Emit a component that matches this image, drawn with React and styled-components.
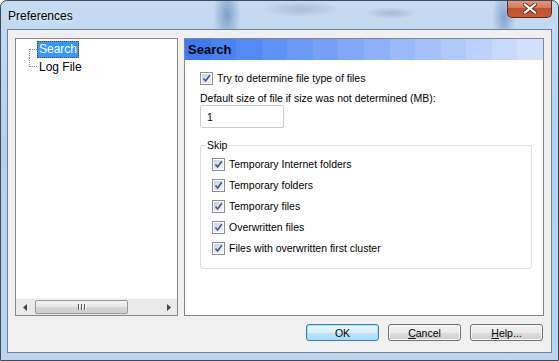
import React from 'react';
import styled, { createGlobalStyle } from 'styled-components';

const GlobalStyle = createGlobalStyle`
  html, body { margin: 0; padding: 0; background: #ffffff; }
  body { font-family: "Liberation Sans", Arial, sans-serif; }
`;

const headerSteps = (from, to, n) => {
  const stops = [];
  for (let i = 0; i < n; i++) {
    const t = i / (n - 1);
    const c = from.map((v, k) => Math.round(v + (to[k] - v) * t));
    const col = `rgb(${c.join(',')})`;
    stops.push(`${col} ${(i * 100) / n}%`, `${col} ${((i + 1) * 100) / n}%`);
  }
  return `linear-gradient(to right, ${stops.join(', ')})`;
};

const Window = styled.div`
  width: 559px;
  height: 361px;
  box-sizing: border-box;
  display: flex;
  flex-direction: column;
  border: 1px solid #3b4a5c;
  border-radius: 7px 7px 0 0;
  background:
    radial-gradient(ellipse 14px 30px at 226px 14px, rgba(70,110,170,0.55), transparent),
    radial-gradient(ellipse 12px 26px at 503px 16px, rgba(70,110,170,0.5), transparent),
    radial-gradient(ellipse 40px 8px at 300px 8px, rgba(90,110,140,0.25), transparent),
    radial-gradient(ellipse 26px 6px at 390px 12px, rgba(90,110,140,0.3), transparent),
    linear-gradient(180deg, #c4dbf1 0%, #b7d1ec 40%, #bcd5ee 100%);
  overflow: hidden;
`;

const TitleBar = styled.div`
  height: 28px;
  flex: none;
  display: flex;
  align-items: flex-start;
  justify-content: space-between;
`;

const Title = styled.div`
  font-size: 12px;
  color: #000;
  padding: 8px 0 0 7px;
  text-shadow: 0 0 6px rgba(255,255,255,0.9);
`;

const CloseButton = styled.div`
  width: 45px;
  height: 18px;
  margin-right: 6px;
  margin-top: -1px;
  box-sizing: border-box;
  border: 1px solid #5e2b1e;
  border-top: none;
  border-radius: 0 0 5px 5px;
  background: linear-gradient(180deg, #e29c86 0%, #d47a5e 45%, #c0502f 50%, #c95b36 100%);
  display: flex;
  align-items: center;
  justify-content: center;
`;

const Client = styled.div`
  flex: 1;
  margin: 0 6px 7px 6px;
  border: 1px solid #6f8297;
  background: #f0f0f0;
  display: flex;
  flex-direction: column;
  padding: 8px 7px 0 7px;
  box-sizing: border-box;
`;

const Panels = styled.div`
  display: flex;
  gap: 6px;
  height: 278px;
`;

const TreePanel = styled.div`
  width: 163px;
  box-sizing: border-box;
  border: 1px solid #828790;
  background: #fff;
  display: flex;
  flex-direction: column;
`;

const TreeList = styled.div`
  flex: 1;
  padding: 1px 0 0 13px;
  font-size: 12px;
`;

const TreeItem = styled.div`
  height: 18px;
  display: flex;
  align-items: center;
`;

const Connector = styled.span`
  width: 8px;
  height: 9px;
  flex: none;
  align-self: ${p => (p.$first ? 'flex-end' : 'flex-start')};
  border-left: 1px dotted #8a8a8a;
  ${p => (p.$first ? 'border-top: 1px dotted #8a8a8a;' : 'border-bottom: 1px dotted #8a8a8a;')}
  box-sizing: border-box;
`;

const TreeLabel = styled.span`
  height: 17px;
  line-height: 17px;
  padding: 0 2px;
  box-sizing: border-box;
  color: ${p => (p.$selected ? '#fff' : '#000')};
  background: ${p => (p.$selected ? '#3399ff' : 'transparent')};
  outline: ${p => (p.$selected ? '1px dotted #7a3a10' : 'none')};
  outline-offset: -1px;
`;

const HScroll = styled.div`
  height: 16px;
  display: flex;
  align-items: center;
  background: #eaeaea;
  border-top: 1px solid #f4f4f4;
`;

const Arrow = styled.div`
  width: 17px;
  height: 16px;
  display: flex;
  align-items: center;
  justify-content: center;
  flex: none;
`;

const Track = styled.div`
  flex: 1;
  height: 16px;
  display: flex;
  align-items: center;
  padding-left: 2px;
`;

const Thumb = styled.div`
  width: 93px;
  height: 14px;
  box-sizing: border-box;
  border: 1px solid #999;
  border-radius: 2px;
  background: linear-gradient(180deg, #f3f3f3 0%, #e8e8e8 50%, #d6d6d6 51%, #cfcfcf 100%);
  display: flex;
  align-items: center;
  justify-content: center;
  gap: 1px;
`;

const Grip = styled.span`
  width: 1px;
  height: 6px;
  background: #555;
  box-shadow: 1px 0 0 #fff;
  margin-right: 1px;
`;

const SettingsPanel = styled.div`
  flex: 1;
  box-sizing: border-box;
  border: 1px solid #828790;
  background: #fff;
  display: flex;
  flex-direction: column;
`;

const PanelHeader = styled.div`
  height: 21px;
  display: flex;
  align-items: center;
  padding-left: 3px;
  font-size: 13px;
  font-weight: bold;
  color: #000;
  background: ${headerSteps([61, 122, 243], [210, 224, 252], 14)};
`;

const PanelBody = styled.div`
  padding: 11px 11px 0 15px;
  font-size: 10.5px;
  color: #000;
  display: flex;
  flex-direction: column;
`;

const CheckRow = styled.label`
  display: flex;
  align-items: center;
  gap: 4px;
  height: 14px;
`;

const Box = styled.span`
  width: 13px;
  height: 13px;
  box-sizing: border-box;
  border: 1px solid #8e8f8f;
  background: #fff;
  display: flex;
  align-items: center;
  justify-content: center;
  flex: none;
`;

const BoxInner = styled.span`
  width: 9px;
  height: 9px;
  background: linear-gradient(135deg, #cbcfd5 0%, #e6e8eb 60%, #f4f5f6 100%);
  display: flex;
  align-items: center;
  justify-content: center;
`;

const FieldLabel = styled.div`
  margin-top: 6px;
  height: 14px;
  line-height: 14px;
`;

const NumberInput = styled.div`
  margin-top: 0;
  width: 84px;
  height: 23px;
  box-sizing: border-box;
  border: 1px solid #c6ccd4;
  border-radius: 2px;
  padding: 5px 0 0 6px;
  font-size: 10.5px;
`;

const Group = styled.fieldset`
  margin: 11px 0 0 0;
  padding: 6px 0 13px 11px;
  border: 1px solid #d5dfe5;
  border-radius: 3px;
  min-inline-size: 0;
  display: flex;
  flex-direction: column;
  gap: 7px;
`;

const Legend = styled.legend`
  padding: 0 1px;
  margin-left: -6px;
  font-size: 10.5px;
`;

const ButtonRow = styled.div`
  display: flex;
  justify-content: flex-end;
  gap: 9px;
  margin-top: 8px;
  padding-right: 1px;
`;

const Button = styled.div`
  width: 73px;
  height: 17px;
  box-sizing: border-box;
  border: 1px solid ${p => (p.$default ? '#3c7fb1' : '#707070')};
  border-radius: 3px;
  background: ${p =>
    p.$default
      ? 'linear-gradient(180deg, #eaf6fd 0%, #d9f0fc 50%, #bee6fd 51%, #a7d9f5 100%)'
      : 'linear-gradient(180deg, #f2f2f2 0%, #ebebeb 50%, #dddddd 51%, #cfcfcf 100%)'};
  box-shadow: inset 0 0 0 1px ${p => (p.$default ? '#9fe0fa' : '#fcfcfc')};
  font-size: 10.5px;
  display: flex;
  align-items: center;
  justify-content: center;
  color: #000;
  u { text-decoration: underline; }
`;

const Check = () => (
  <Box>
    <BoxInner>
      <svg width="9" height="9" viewBox="0 0 9 9">
        <path d="M1.5 4.5 L3.6 7 L7.8 1.3" fill="none" stroke="#3a5797" strokeWidth="1.6" />
      </svg>
    </BoxInner>
  </Box>
);

const skipItems = [
  'Temporary Internet folders',
  'Temporary folders',
  'Temporary files',
  'Overwritten files',
  'Files with overwritten first cluster',
];

export default function App() {
  return (
    <>
      <GlobalStyle />
      <Window>
        <TitleBar>
          <Title>Preferences</Title>
          <CloseButton>
            <svg width="14" height="11" viewBox="0 0 14 11">
              <path d="M2 1.5 L12 9.5 M12 1.5 L2 9.5" stroke="#5a2a20" strokeWidth="4" strokeLinecap="square" />
              <path d="M2 1.5 L12 9.5 M12 1.5 L2 9.5" stroke="#fff" strokeWidth="2.2" strokeLinecap="square" />
            </svg>
          </CloseButton>
        </TitleBar>
        <Client>
          <Panels>
            <TreePanel>
              <TreeList>
                <TreeItem>
                  <Connector $first />
                  <TreeLabel $selected>Search</TreeLabel>
                </TreeItem>
                <TreeItem>
                  <Connector />
                  <TreeLabel>Log File</TreeLabel>
                </TreeItem>
              </TreeList>
              <HScroll>
                <Arrow>
                  <svg width="4" height="7" viewBox="0 0 4 7"><path d="M4 0 L0 3.5 L4 7Z" fill="#444" /></svg>
                </Arrow>
                <Track>
                  <Thumb>
                    <Grip /><Grip /><Grip />
                  </Thumb>
                </Track>
                <Arrow>
                  <svg width="4" height="7" viewBox="0 0 4 7"><path d="M0 0 L4 3.5 L0 7Z" fill="#444" /></svg>
                </Arrow>
              </HScroll>
            </TreePanel>
            <SettingsPanel>
              <PanelHeader>Search</PanelHeader>
              <PanelBody>
                <CheckRow>
                  <Check />
                  Try to determine file type of files
                </CheckRow>
                <FieldLabel>Default size of file if size was not determined (MB):</FieldLabel>
                <NumberInput>1</NumberInput>
                <Group>
                  <Legend>Skip</Legend>
                  {skipItems.map(item => (
                    <CheckRow key={item}>
                      <Check />
                      {item}
                    </CheckRow>
                  ))}
                </Group>
              </PanelBody>
            </SettingsPanel>
          </Panels>
          <ButtonRow>
            <Button $default>OK</Button>
            <Button><span><u>C</u>ancel</span></Button>
            <Button><span><u>H</u>elp...</span></Button>
          </ButtonRow>
        </Client>
      </Window>
    </>
  );
}
